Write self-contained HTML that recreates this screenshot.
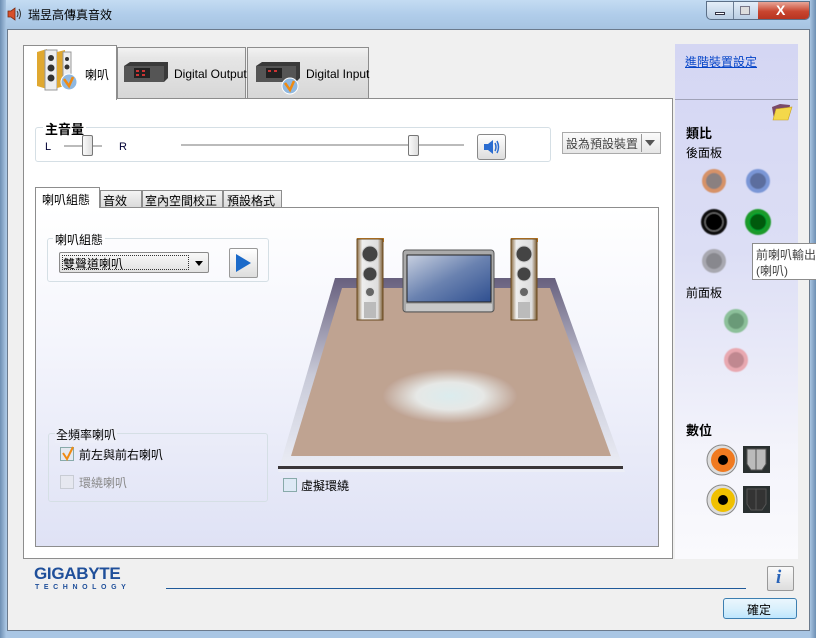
<!DOCTYPE html>
<html><head><meta charset="utf-8"><style>
*{margin:0;padding:0;box-sizing:border-box}
body{width:816px;height:638px;overflow:hidden;position:relative;font-family:"Liberation Sans","Noto Sans CJK TC",sans-serif;font-size:12px;color:#000;background:#a9c6e4}
.a{position:absolute}
.t{font-size:12px;white-space:nowrap}
</style></head><body>
<!-- title bar -->
<div class="a" style="left:0;top:0;width:816px;height:30px;background:linear-gradient(180deg,#c4dcf2 0%,#b0cdea 50%,#a6c3e0 100%)"></div>
<div class="a" style="left:0;top:0;width:6px;height:638px;background:linear-gradient(90deg,#6d8fb3,#a8c4e2)"></div>
<div class="a" style="left:810px;top:0;width:6px;height:638px;background:linear-gradient(90deg,#a8c4e2,#6d8fb3)"></div>
<svg class="a" style="left:6px;top:6px" width="16" height="16"><path d="M2 5h3l4-3v12l-4-3H2z" fill="#d8502a" stroke="#7a2a10" stroke-width=".8"/><path d="M11 5q2 3 0 6M13 3q3 5 0 10" stroke="#333" fill="none"/></svg>
<div class="a t" style="left:28px;top:6px;font-size:12px">瑞昱高傳真音效</div>
<div class="a" style="left:706px;top:1px;width:104px;height:19px;border:1px solid #5b6f87;border-radius:0 0 5px 5px;background:linear-gradient(#e4eef8,#b9cde3);overflow:hidden">
 <div class="a" style="left:26px;top:0;width:1px;height:19px;background:#6b7e95"></div>
 <div class="a" style="left:51px;top:0;width:52px;height:19px;background:linear-gradient(#e8a597,#c8452f 50%,#b3311d)"></div>
 <div class="a" style="left:8px;top:10px;width:10px;height:3px;background:#fff;border:1px solid #334"></div>
 <div class="a" style="left:33px;top:4px;width:10px;height:9px;border:1px solid #778;background:#ddd"></div>
 <div class="a t" style="left:69px;top:0;color:#fff;font-weight:bold;font-size:14px">X</div>
</div>
<!-- client -->
<div class="a" style="left:7px;top:29px;width:803px;height:602px;background:#f0f0f0;border:1px solid #6b7a8c"></div>
<!-- main panel -->
<div class="a" style="left:23px;top:98px;width:650px;height:461px;background:#fff;border:1px solid #8d8d8d"></div>
<!-- tabs -->
<div class="a" style="left:117px;top:47px;width:129px;height:52px;border:1px solid #8d8d8d;background:linear-gradient(#f2f2f2,#e6e6e6 20%,#d7d7d7)"></div>
<div class="a" style="left:247px;top:47px;width:122px;height:52px;border:1px solid #8d8d8d;background:linear-gradient(#f2f2f2,#e6e6e6 20%,#d7d7d7)"></div>
<div class="a" style="left:23px;top:45px;width:94px;height:55px;border:1px solid #8d8d8d;border-bottom:none;background:#fff"></div>
<!-- tab icons -->
<svg class="a" style="left:35px;top:48px" width="44" height="46">
<path d="M2 4l10-3v40l-10-3z" fill="#e0a830"/><rect x="10" y="2" width="12" height="40" fill="#eee" stroke="#999"/>
<circle cx="16" cy="10" r="3" fill="#333"/><circle cx="16" cy="20" r="3.5" fill="#333"/><circle cx="16" cy="30" r="3.5" fill="#333"/>
<path d="M22 4l8-2v36l-8 2z" fill="#e0a830"/><rect x="28" y="4" width="8" height="34" fill="#eee" stroke="#999"/>
<circle cx="32" cy="11" r="2" fill="#333"/><circle cx="32" cy="19" r="2.5" fill="#333"/>
<circle cx="34" cy="34" r="8" fill="#8fb8e0" stroke="#fff"/><path d="M29 31l5 7 4-9" stroke="#f08a10" stroke-width="2.5" fill="none"/></svg>
<div class="a t" style="left:85px;top:66px">喇叭</div>
<svg class="a" style="left:122px;top:60px" width="48" height="24"><path d="M2 6l6-4h38v16l-4 4H2z" fill="#3a3a3a"/><rect x="2" y="6" width="40" height="16" fill="#555"/><rect x="12" y="8" width="16" height="10" fill="#222"/><rect x="14" y="10" width="3" height="2" fill="#c33"/><rect x="20" y="10" width="3" height="2" fill="#c33"/><rect x="14" y="14" width="3" height="2" fill="#c33"/><rect x="20" y="14" width="3" height="2" fill="#c33"/></svg>
<div class="a t" style="left:174px;top:67px">Digital Output</div>
<svg class="a" style="left:254px;top:60px" width="48" height="36"><path d="M2 6l6-4h38v16l-4 4H2z" fill="#3a3a3a"/><rect x="2" y="6" width="40" height="16" fill="#555"/><rect x="12" y="8" width="16" height="10" fill="#222"/><rect x="14" y="10" width="3" height="2" fill="#c33"/><rect x="20" y="10" width="3" height="2" fill="#c33"/><circle cx="36" cy="26" r="8" fill="#8fb8e0" stroke="#fff"/><path d="M31 23l5 7 4-9" stroke="#f08a10" stroke-width="2.5" fill="none"/></svg>
<div class="a t" style="left:306px;top:67px">Digital Input</div>
<!-- master volume -->
<div class="a" style="left:35px;top:127px;width:516px;height:35px;border:1px solid #d5dfe5;border-radius:3px"></div>
<div class="a t" style="left:43px;top:119px;background:#fff;padding:0 2px;font-weight:bold;font-size:13px">主音量</div>
<div class="a t" style="left:45px;top:141px;font-size:11px;color:#003">L</div>
<div class="a t" style="left:119px;top:141px;font-size:11px;color:#003">R</div>
<div class="a" style="left:64px;top:145px;width:38px;height:2px;background:#bbb"></div>
<div class="a" style="left:82px;top:135px;width:11px;height:21px;border:1px solid #777;border-radius:2px;background:linear-gradient(90deg,#fafafa,#ddd)"></div>
<div class="a" style="left:181px;top:144px;width:283px;height:2px;background:#bbb"></div>
<div class="a" style="left:408px;top:135px;width:11px;height:21px;border:1px solid #777;border-radius:2px;background:linear-gradient(90deg,#fafafa,#ddd)"></div>
<div class="a" style="left:477px;top:134px;width:29px;height:26px;border:1px solid #888;border-radius:3px;background:linear-gradient(#fff,#ddd)"></div>
<svg class="a" style="left:482px;top:138px" width="20" height="18"><path d="M2 6h4l5-4v14l-5-4H2z" fill="#2a6cd0"/><path d="M13 5q2 4 0 8M15 3q3 6 0 12" stroke="#2a6cd0" fill="none" stroke-width="1.5"/></svg>
<div class="a" style="left:562px;top:132px;width:99px;height:22px;border:1px solid #aaa;background:linear-gradient(#fbfbfb,#e6e6e6)"></div>
<div class="a t" style="left:566px;top:135px;color:#444">設為預設裝置</div>
<div class="a" style="left:641px;top:134px;width:1px;height:18px;background:#999"></div>
<div class="a" style="left:645px;top:140px;border:5px solid transparent;border-top:6px solid #555"></div>
<!-- subtabs -->
<div class="a" style="left:35px;top:207px;width:624px;height:340px;border:1px solid #8d8d8d;background:linear-gradient(#fff 0%,#f4f5fc 40%,#dfe2f5 100%)"></div>
<div class="a" style="left:100px;top:190px;width:42px;height:18px;border:1px solid #8d8d8d;background:linear-gradient(#f4f4f4,#dadada)"></div>
<div class="a" style="left:142px;top:190px;width:81px;height:18px;border:1px solid #8d8d8d;background:linear-gradient(#f4f4f4,#dadada)"></div>
<div class="a" style="left:223px;top:190px;width:59px;height:18px;border:1px solid #8d8d8d;background:linear-gradient(#f4f4f4,#dadada)"></div>
<div class="a" style="left:35px;top:187px;width:65px;height:21px;border:1px solid #8d8d8d;border-bottom:none;background:#fff"></div>
<div class="a t" style="left:42px;top:191px">喇叭組態</div>
<div class="a t" style="left:103px;top:192px">音效</div>
<div class="a t" style="left:145px;top:192px">室內空間校正</div>
<div class="a t" style="left:227px;top:192px">預設格式</div>
<!-- config group -->
<div class="a" style="left:47px;top:238px;width:222px;height:44px;border:1px solid #d5dfe5;border-radius:3px"></div>
<div class="a t" style="left:53px;top:231px;background:#fdfdff;padding:0 2px">喇叭組態</div>
<div class="a" style="left:59px;top:252px;width:150px;height:21px;border:1px solid #8a8a8a;border-radius:2px;background:linear-gradient(#f8f8f8,#e2e2e2)"></div>
<div class="a" style="left:62px;top:255px;width:127px;height:15px;border:1px dotted #333"></div>
<div class="a t" style="left:63px;top:255px">雙聲道喇叭</div>
<div class="a" style="left:195px;top:261px;border:4px solid transparent;border-top:5px solid #000"></div>
<div class="a" style="left:229px;top:248px;width:29px;height:30px;border:1px solid #999;border-radius:2px;background:linear-gradient(#fff,#ddd)"></div>
<div class="a" style="left:236px;top:254px;border-left:15px solid #1b6ac9;border-top:9px solid transparent;border-bottom:9px solid transparent"></div>
<!-- room -->
<svg class="a" style="left:278px;top:230px" width="350" height="245">
<defs>
<linearGradient id="rim" x1="0" y1="0" x2="0" y2="1"><stop offset="0" stop-color="#67607e"/><stop offset=".5" stop-color="#c8cad8"/><stop offset="1" stop-color="#eceef6"/></linearGradient>
<radialGradient id="spot" cx=".5" cy=".5" r=".5"><stop offset="0" stop-color="#dbecee"/><stop offset=".5" stop-color="#e6e8e6"/><stop offset="1" stop-color="#bfa393"/></radialGradient>
<linearGradient id="spk" x1="0" x2="1"><stop offset="0" stop-color="#8a6a40"/><stop offset=".2" stop-color="#eee"/><stop offset=".8" stop-color="#ddd"/><stop offset="1" stop-color="#7a5a30"/></linearGradient>
<linearGradient id="scr" x1="0" y1="0" x2="1" y2="1"><stop offset="0" stop-color="#c8d0e0"/><stop offset=".5" stop-color="#6a82b0"/><stop offset="1" stop-color="#2f4f90"/></linearGradient>
</defs>
<path d="M57 48H277L347 242H0z" fill="url(#rim)"/>
<path d="M64 58H272L333 226H13z" fill="#bfa391"/>
<ellipse cx="172" cy="166" rx="67" ry="27" fill="url(#spot)"/>
<rect x="0" y="236" width="345" height="3" fill="#3a3638"/>
<g id="sp"><path d="M79 8h27v4h-27z" fill="#e08a20"/><rect x="79" y="9" width="26" height="81" fill="url(#spk)" stroke="#6a4a20"/>
<circle cx="92" cy="24" r="8" fill="#444" stroke="#ccc"/><circle cx="92" cy="44" r="7" fill="#444" stroke="#ccc"/><circle cx="92" cy="62" r="4.5" fill="#666" stroke="#ddd"/><rect x="86" y="72" width="12" height="16" fill="#bbb"/></g>
<use href="#sp" x="154"/>
<rect x="125" y="20" width="91" height="62" rx="3" fill="#aaa" stroke="#555"/>
<rect x="129" y="25" width="84" height="47" fill="url(#scr)" stroke="#222"/>
<rect x="128" y="74" width="86" height="7" fill="#c8c8c8"/>
</svg>
<div class="a" style="left:283px;top:478px;width:14px;height:14px;border:1px solid #8aa;background:#dde9f5"></div>
<div class="a t" style="left:301px;top:477px">虛擬環繞</div>
<!-- full range group -->
<div class="a" style="left:48px;top:433px;width:220px;height:69px;border:1px solid #d5dfe5;border-radius:3px"></div>
<div class="a t" style="left:55px;top:426px;background:#eceef8;padding:0 1px">全頻率喇叭</div>
<div class="a" style="left:60px;top:447px;width:14px;height:14px;border:1px solid #8aa;background:#e4e8f0"></div>
<svg class="a" style="left:60px;top:445px" width="16" height="16"><path d="M3 8l4 6 6-12" stroke="#f08a10" stroke-width="2" fill="none"/></svg>
<div class="a t" style="left:79px;top:446px">前左與前右喇叭</div>
<div class="a" style="left:60px;top:475px;width:14px;height:14px;border:1px solid #c8ccd4;background:#e6e8f0"></div>
<div class="a t" style="left:79px;top:474px;color:#8a8a8a">環繞喇叭</div>
<!-- right panel -->
<div class="a" style="left:675px;top:44px;width:123px;height:515px;background:linear-gradient(#d4d6f3 0%,#dcdef5 40%,#f4f4fb 80%,#fafafd 100%)"></div>
<div class="a" style="left:675px;top:99px;width:123px;height:1px;background:#a0a2b8"></div>
<div class="a t" style="left:685px;top:53px;color:#0645c8;text-decoration:underline">進階裝置設定</div>
<svg class="a" style="left:770px;top:101px" width="24" height="20"><path d="M2 6l8-3 10 1-2 14-14 0z" fill="#7a4a6a"/><path d="M6 8l16-2-4 13H3z" fill="#f4d84a" stroke="#c8a020" stroke-width=".6"/></svg>
<div class="a t" style="left:686px;top:123px;font-weight:bold;font-size:13px">類比</div>
<div class="a t" style="left:686px;top:144px">後面板</div>
<div class="a t" style="left:686px;top:284px">前面板</div>
<svg class="a" style="left:690px;top:165px" width="100" height="210">
<defs><filter id="b"><feGaussianBlur stdDeviation=".6"/></filter></defs>
<g filter="url(#b)">
<circle cx="24" cy="16" r="12" fill="#d69268"/><circle cx="24" cy="16" r="8" fill="#8a8080"/>
<circle cx="68" cy="16" r="12" fill="#7a96d6"/><circle cx="68" cy="16" r="8" fill="#5b6e9e"/>
<circle cx="24" cy="57" r="13" fill="#111"/><circle cx="24" cy="57" r="9" fill="#000" stroke="#777"/>
<circle cx="68" cy="57" r="13" fill="#1a9a2a"/><circle cx="68" cy="57" r="8.5" fill="#005a10" stroke="#0a3"/>
<circle cx="24" cy="96" r="12" fill="#a8a8b0"/><circle cx="24" cy="96" r="8" fill="#88888e"/>
<circle cx="46" cy="156" r="12" fill="#8cc09a"/><circle cx="46" cy="156" r="8" fill="#6a9a78"/>
<circle cx="46" cy="195" r="12" fill="#e8a8b0"/><circle cx="46" cy="195" r="8" fill="#c08890"/>
</g></svg>
<div class="a" style="left:752px;top:243px;width:64px;height:37px;background:#fff;border:1px solid #8c8c8c;border-right:none"></div>
<div class="a t" style="left:756px;top:246px;color:#444">前喇叭輸出</div>
<div class="a t" style="left:756px;top:262px;color:#444">(喇叭)</div>
<div class="a t" style="left:686px;top:420px;font-weight:bold;font-size:13px">數位</div>
<svg class="a" style="left:705px;top:444px" width="70" height="72">
<circle cx="17" cy="16" r="15" fill="#ddd" stroke="#888"/><circle cx="18" cy="16" r="12" fill="#f07a20"/><circle cx="18" cy="16" r="5" fill="#000"/>
<rect x="38" y="2" width="27" height="27" fill="#2a3030"/><path d="M42 5h19v15l-4 6h-11l-4-6z" fill="#bbb" stroke="#555"/><path d="M51 5v21" stroke="#555"/>
<circle cx="17" cy="56" r="15" fill="#ddd" stroke="#888"/><circle cx="18" cy="56" r="12" fill="#f0c000"/><circle cx="18" cy="56" r="5" fill="#000"/>
<rect x="38" y="42" width="27" height="27" fill="#2a3030"/><path d="M42 45h19v15l-4 6h-11l-4-6z" fill="#333" stroke="#555"/><path d="M51 45v21" stroke="#555"/>
</svg>
<!-- footer -->
<div class="a" style="left:34px;top:564px;font-weight:bold;font-size:17px;color:#1f4f9a;letter-spacing:-.3px">GIGABYTE</div>
<div class="a" style="left:35px;top:584px;font-size:7px;color:#1f4f9a;letter-spacing:4.6px;font-weight:bold">TECHNOLOGY</div>
<div class="a" style="left:166px;top:588px;width:580px;height:1px;background:#1f5a9a"></div>
<div class="a" style="left:767px;top:566px;width:27px;height:25px;border:1px solid #999;border-radius:2px;background:linear-gradient(#fafafa,#ddd)"></div>
<div class="a" style="left:776px;top:567px;font-style:italic;font-weight:bold;font-size:19px;color:#2a64b8;font-family:'Liberation Serif',serif">i</div>
<div class="a" style="left:723px;top:598px;width:74px;height:21px;border:1px solid #3c7fb1;border-radius:3px;background:linear-gradient(#eaf6fd,#d9f0fc 50%,#bee6fd)"></div>
<div class="a t" style="left:747px;top:601px">確定</div>
</body></html>
